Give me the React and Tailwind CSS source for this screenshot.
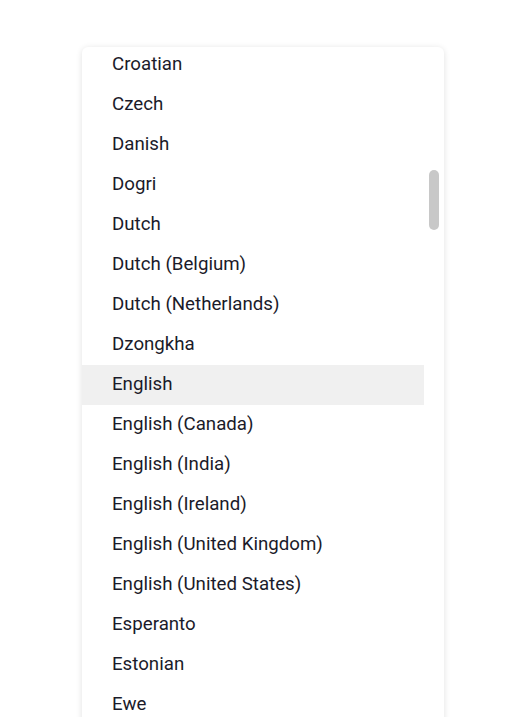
import React from 'react';

const languages = [
  'Croatian',
  'Czech',
  'Danish',
  'Dogri',
  'Dutch',
  'Dutch (Belgium)',
  'Dutch (Netherlands)',
  'Dzongkha',
  'English',
  'English (Canada)',
  'English (India)',
  'English (Ireland)',
  'English (United Kingdom)',
  'English (United States)',
  'Esperanto',
  'Estonian',
  'Ewe',
  'Faroese',
  'Filipino',
];

export default function App() {
  return (
    <div className="w-[522px] h-[717px] overflow-hidden bg-white font-['Roboto',sans-serif]">
      <div className="pt-[47px] pl-[82px]">
        {/* dropdown panel */}
        <div className="relative w-[362px] h-[760px] overflow-hidden rounded-md bg-white shadow-[0_1px_6px_rgba(0,0,0,0.12)]">
          <ul className="-mt-[2px] pr-5">
            {languages.map((lang) => (
              <li
                key={lang}
                className={`h-10 flex items-center pl-[30px] pb-[2px] text-[18.7px] text-[#1b1b2a] ${
                  lang === 'English' ? 'bg-[#f0f0f0]' : ''
                }`}
              >
                {lang}
              </li>
            ))}
          </ul>

          {/* scrollbar thumb */}
          <div className="absolute right-[5px] top-[123px] w-[10px] h-[60px] rounded-full bg-[#c8c8c8]" />
        </div>
      </div>
    </div>
  );
}
